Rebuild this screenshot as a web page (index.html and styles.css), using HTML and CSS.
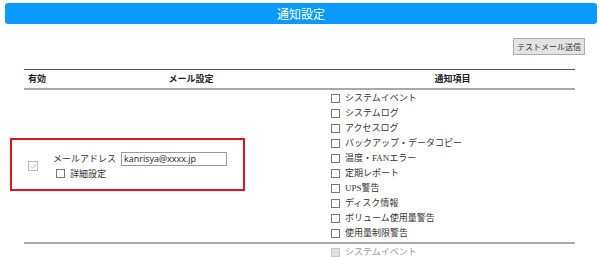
FILE: index.html
```html
<!DOCTYPE html>
<html lang="ja">
<head>
<meta charset="utf-8">
<title>通知設定</title>
<link rel="stylesheet" href="styles.css">
</head>
<body>
<div class="page">
  <div class="titlebar">通知設定</div>
  <div class="actions"><button class="btn" type="button">テストメール送信</button></div>
  <table class="grid">
    <colgroup><col class="c1"><col class="c2"><col class="c3"></colgroup>
    <thead>
      <tr><th class="left">有効</th><th>メール設定</th><th>通知項目</th></tr>
    </thead>
    <tbody>
      <tr>
        <td class="en"><span class="cb checked-dis"><svg viewBox="0 0 9 9" width="7" height="7"><path d="M1.2 4.6 L3.4 6.8 L7.8 1.8" fill="none" stroke="#a8a8a8" stroke-width="1"/></svg></span></td>
        <td class="mail">
          <div class="line">メールアドレス <span class="inp">kanrisya@xxxx.jp</span></div>
          <div class="line sub"><span class="cb"></span>詳細設定</div>
        </td>
        <td class="items">
          <ul>
            <li><span class="cb"></span>システムイベント</li>
            <li><span class="cb"></span>システムログ</li>
            <li><span class="cb"></span>アクセスログ</li>
            <li><span class="cb"></span>バックアップ・データコピー</li>
            <li><span class="cb"></span>温度・FANエラー</li>
            <li><span class="cb"></span>定期レポート</li>
            <li><span class="cb"></span>UPS警告</li>
            <li><span class="cb"></span>ディスク情報</li>
            <li><span class="cb"></span>ボリューム使用量警告</li>
            <li><span class="cb"></span>使用量制限警告</li>
          </ul>
        </td>
      </tr>
      <tr>
        <td class="en"></td>
        <td class="mail"></td>
        <td class="items">
          <ul class="dis">
            <li><span class="cb dis"></span>システムイベント</li>
            <li><span class="cb dis"></span>システムログ</li>
          </ul>
        </td>
      </tr>
    </tbody>
  </table>
  <div class="highlight"></div>
</div>
</body>
</html>
```
FILE: styles.css
```css
html, body {
  margin: 0;
  padding: 0;
  overflow: hidden;
  background: #fff;
}
.page {
  position: relative;
  width: 600px;
  height: 257px;
  font-family: "Noto Sans CJK JP", "Noto Sans", sans-serif;
  color: #333;
}
.titlebar {
  margin: 3px 3px 0 5px;
  height: 21px;
  line-height: 21px;
  background: #0a99fc;
  border-radius: 3px;
  color: #fff;
  text-align: center;
  font-size: 12px;
}
.actions {
  display: flex;
  justify-content: flex-end;
  margin: 14px 15px 0 0;
}
.btn {
  height: 17px;
  padding: 0 3px;
  border: 1px solid #adadad;
  background: #e3e3e3;
  color: #333;
  font-family: "Noto Sans CJK JP", sans-serif;
  font-size: 8px;
  line-height: 15px;
}
.grid {
  margin: 14px 0 0 24px;
  width: 551px;
  table-layout: fixed;
  border-collapse: collapse;
  font-size: 9px;
}
.c1 { width: 28px; }
.c2 { width: 278px; }
.c3 { width: 245px; }
.grid thead tr {
  border-top: 1px solid #555;
  border-bottom: 2px solid #aaa;
}
.grid th {
  height: 18px;
  padding: 0;
  font-weight: bold;
  text-align: center;
  line-height: 18px;
  color: #222;
}
.grid th.left {
  text-align: left;
  padding-left: 4px;
}
.grid tbody tr {
  border-bottom: 2px solid #aaa;
}
.grid td {
  padding: 1px 0;
  vertical-align: middle;
}
.en {
  padding-left: 4px !important;
}
.mail {
  padding-left: 1px !important;
}
.line {
  display: flex;
  align-items: center;
  height: 15px;
  line-height: 15px;
}
.line.sub {
  padding-left: 3px;
}
.inp {
  display: inline-block;
  box-sizing: border-box;
  width: 106px;
  height: 14px;
  line-height: 12px;
  margin-left: 5px;
  padding: 0 2px;
  border: 1px solid #999;
  font-family: "Open Sans", "Liberation Sans", sans-serif;
  font-size: 9px;
  color: #222;
}
.items {
  padding-left: 1px !important;
  vertical-align: top;
}
.items ul {
  list-style: none;
  margin: 0;
  padding: 0;
}
.items li {
  display: flex;
  align-items: center;
  height: 15px;
  line-height: 15px;
  font-family: "Liberation Serif", "Noto Sans CJK JP", serif;
  color: #333;
}
.items ul.dis li {
  color: #999;
}
.cb {
  display: inline-flex;
  align-items: center;
  justify-content: center;
  box-sizing: border-box;
  width: 9px;
  height: 9px;
  margin-right: 5px;
  border: 1px solid #777;
  background: #fff;
  flex: none;
}
.cb.checked-dis {
  width: 10px;
  height: 10px;
  border-color: #bbb;
}
.cb.dis {
  border-color: #c8c8c8;
  background: #e2e2e2;
}
.highlight {
  position: absolute;
  left: 10px;
  top: 135px;
  width: 235px;
  height: 53px;
  box-sizing: border-box;
  border: 2px solid #e0141e;
  pointer-events: none;
}
```
